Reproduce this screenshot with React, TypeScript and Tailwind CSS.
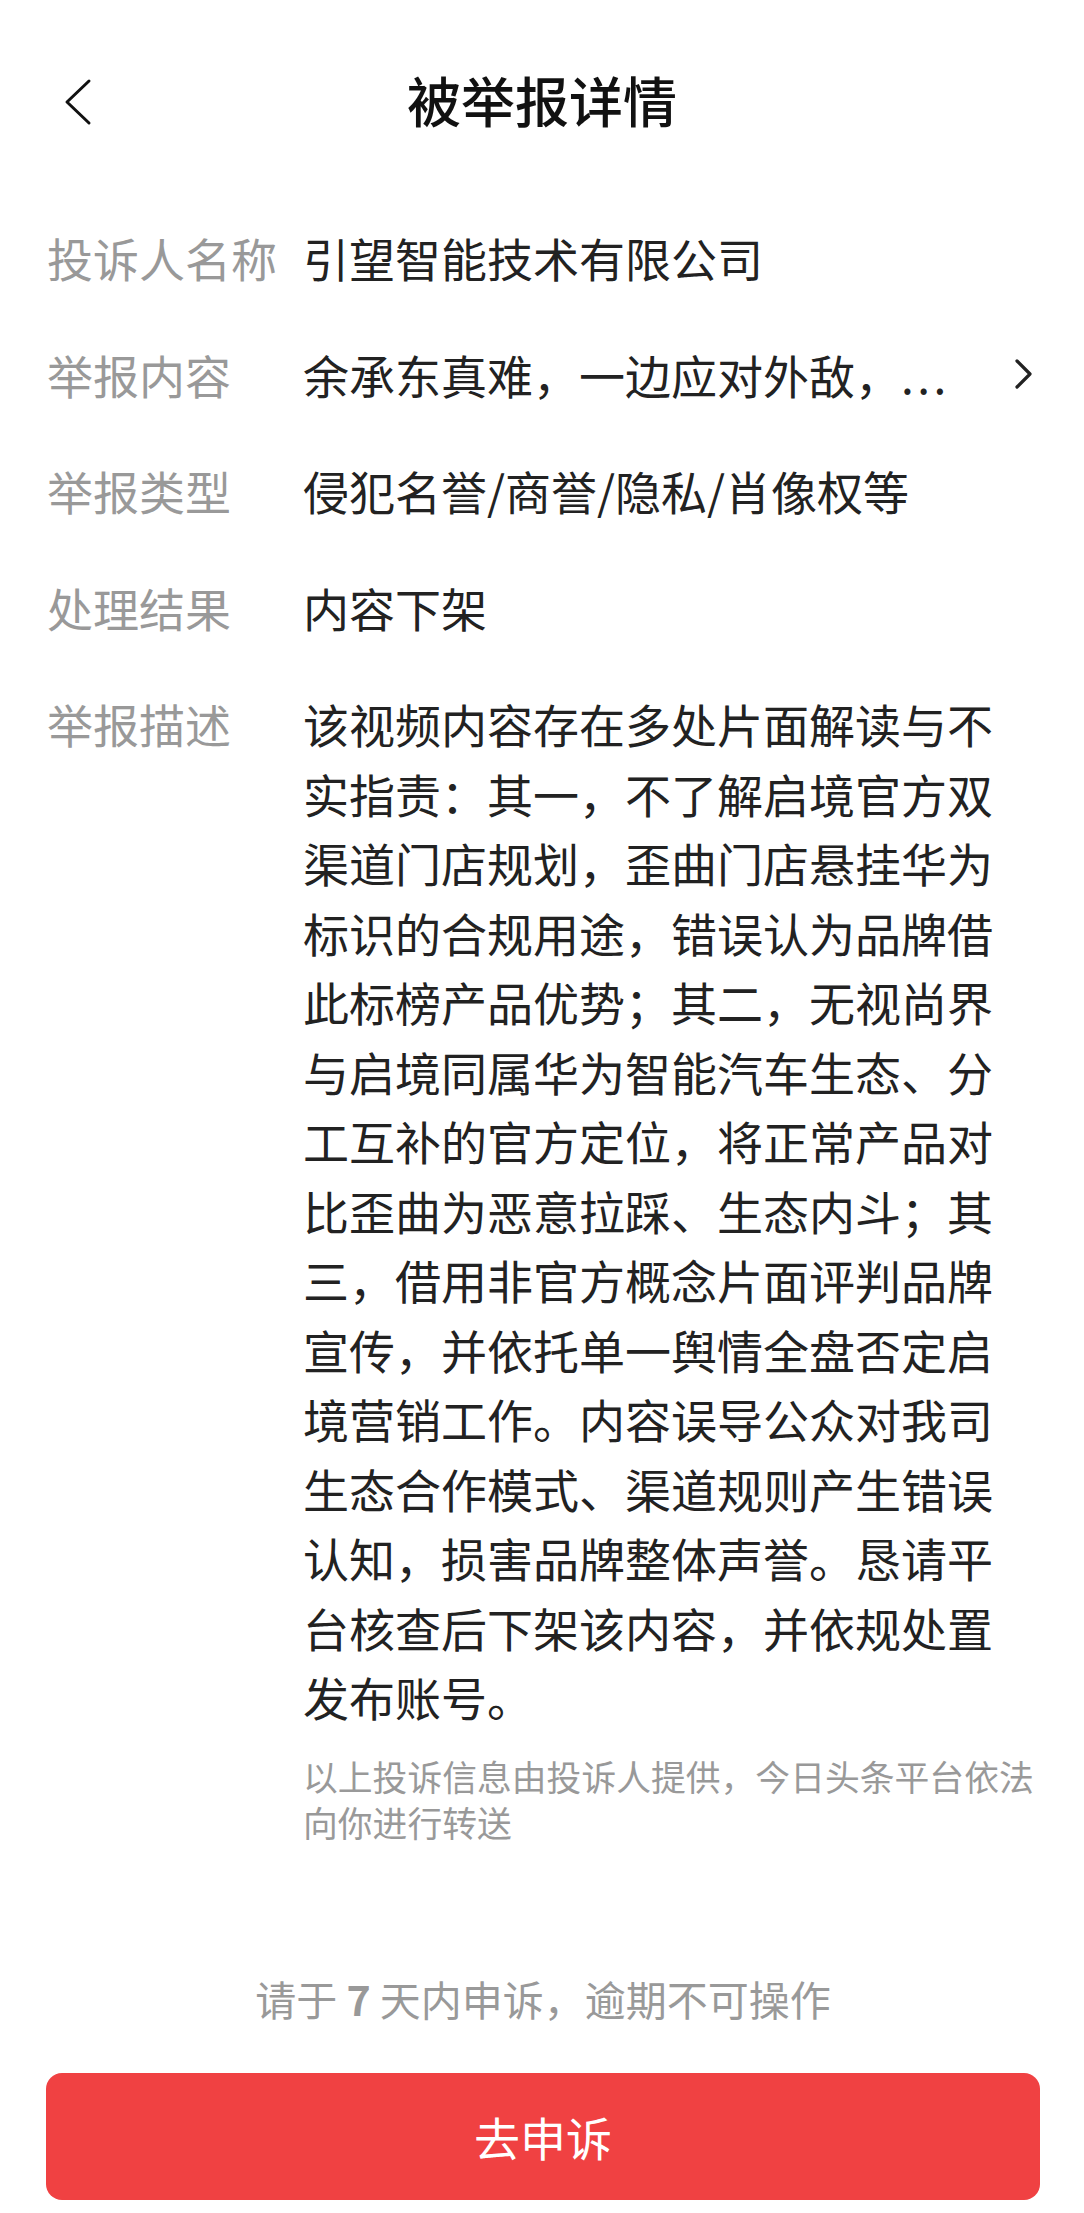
import type { ReactNode } from 'react'

const font = { fontFamily: '"Noto Sans CJK SC", "Noto Sans", sans-serif' }

function BackIcon() {
  return (
    <svg width="40" height="60" viewBox="0 0 40 60" fill="none">
      <path d="M33 9 L11 30 L33 51" stroke="#111" strokeWidth="3" strokeLinecap="round" strokeLinejoin="round" />
    </svg>
  )
}

function ChevronRight() {
  return (
    <svg width="24" height="40" viewBox="0 0 24 40" fill="none">
      <path d="M7 7 L20 20 L7 33" stroke="#222" strokeWidth="3.2" strokeLinecap="round" strokeLinejoin="round" />
    </svg>
  )
}

function Row({ label, children }: { label: string; children: ReactNode }) {
  return (
    <div className="flex items-start">
      <div className="w-[256px] shrink-0 text-[46px] leading-[69.5px] text-[#999999]">{label}</div>
      <div className="flex-1 min-w-0">{children}</div>
    </div>
  )
}

export default function App() {
  const desc =
    '该视频内容存在多处片面解读与不实指责：其一，不了解启境官方双渠道门店规划，歪曲门店悬挂华为标识的合规用途，错误认为品牌借此标榜产品优势；其二，无视尚界与启境同属华为智能汽车生态、分工互补的官方定位，将正常产品对比歪曲为恶意拉踩、生态内斗；其三，借用非官方概念片面评判品牌宣传，并依托单一舆情全盘否定启境营销工作。内容误导公众对我司生态合作模式、渠道规则产生错误认知，损害品牌整体声誉。恳请平台核查后下架该内容，并依规处置发布账号。'

  return (
    <div className="min-h-screen flex flex-col bg-white" style={font}>
      {/* Header */}
      <header className="h-[200px] grid grid-cols-[1fr_auto_1fr] items-center px-[45px]">
        <div className="flex items-center pt-[4px] pl-[11px]">
          <BackIcon />
        </div>
        <h1 className="text-[54px] font-medium text-[#111111] leading-none">被举报详情</h1>
        <div />
      </header>

      <main className="pt-[23px] pl-[47px] pr-[44px] flex flex-col gap-[47px]">
        <Row label="投诉人名称">
          <p className="text-[46px] leading-[69.5px] text-[#222222]">引望智能技术有限公司</p>
        </Row>
        <Row label="举报内容">
          <div className="flex items-center justify-between">
            <p className="text-[46px] leading-[69.5px] text-[#222222] whitespace-nowrap">
              余承东真难，一边应对外敌，<span className="tracking-[3.5px]">...</span>
            </p>
            <div className="mr-[6px]">
              <ChevronRight />
            </div>
          </div>
        </Row>
        <Row label="举报类型">
          <p className="text-[46px] leading-[69.5px] text-[#222222]">侵犯名誉/商誉/隐私/肖像权等</p>
        </Row>
        <Row label="处理结果">
          <p className="text-[46px] leading-[69.5px] text-[#222222]">内容下架</p>
        </Row>
        <Row label="举报描述">
          <p className="max-w-[720px] text-[46px] leading-[69.5px] text-[#222222]">{desc}</p>
          <p className="mt-[21px] text-[34.8px] leading-[46.6px] text-[#999999]">
            以上投诉信息由投诉人提供，今日头条平台依法向你进行转送
          </p>
        </Row>
      </main>

      <div className="flex-1" />

      {/* Footer */}
      <footer className="pl-[46px] pr-[44px] pb-[13px]">
        <p className="text-center text-[41px] leading-[56px] text-[#999999]">
          请于 <span className="font-bold">7</span> 天内申诉，逾期不可操作
        </p>
        <button className="mt-[47px] w-full h-[127px] rounded-[16px] bg-[#F04142] text-white text-[46px]">
          去申诉
        </button>
      </footer>
    </div>
  )
}
